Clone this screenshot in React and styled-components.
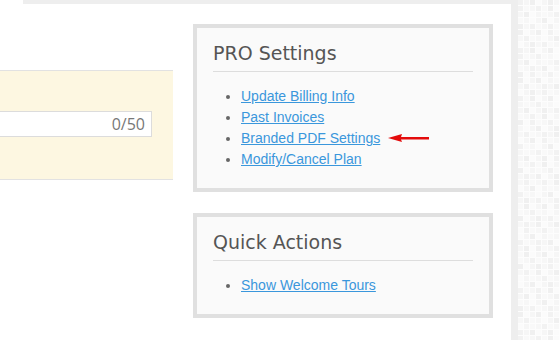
import React from "react";
import styled, { createGlobalStyle } from "styled-components";

const GlobalStyle = createGlobalStyle`
  html, body {
    margin: 0;
    padding: 0;
    background: #fff;
  }
  body {
    font-family: "Liberation Sans", Arial, sans-serif;
  }
`;

const Page = styled.div`
  display: flex;
  width: 560px;
  height: 340px;
  overflow: hidden;
  background: #fff;
`;

const Content = styled.div`
  width: 513px;
  display: flex;
  flex-direction: column;
`;

const TopBar = styled.div`
  height: 4px;
  margin-left: 23px;
  background: #eeeeee;
`;

const Columns = styled.div`
  display: flex;
  align-items: flex-start;
`;

const MainColumn = styled.div`
  width: 173px;
  padding-top: 66px;
`;

const NoteBox = styled.div`
  background: #fdf7e1;
  border-top: 1px solid #e2e2e2;
  border-bottom: 1px solid #e2e2e2;
  padding: 40px 21px 42px 0;
`;

const CountInput = styled.div`
  height: 24px;
  background: #fff;
  border: 1px solid #dcdcdc;
  border-left: none;
  display: flex;
  align-items: center;
  justify-content: flex-end;
  padding-right: 6px;
  font-family: "Open Sans", sans-serif;
  font-size: 16px;
  color: #777;
`;

const Sidebar = styled.div`
  width: 300px;
  margin-left: 20px;
  padding-top: 20px;
  display: flex;
  flex-direction: column;
  gap: 21px;
`;

const Card = styled.section`
  border: 4px solid #e0e0e0;
  background: #fafafa;
  padding: 12px 16px 18px;
`;

const CardTitle = styled.h2`
  margin: 0;
  font-family: "DejaVu Sans", sans-serif;
  font-weight: normal;
  font-size: 19px;
  line-height: 27px;
  color: #555;
  padding-bottom: 4px;
  border-bottom: 1px solid #dddddd;
`;

const LinkList = styled.ul`
  margin: 14px 0 0;
  padding: 0 0 0 28px;
  list-style: disc;
  color: #666;
`;

const Item = styled.li`
  font-size: 14px;
  line-height: 21px;
`;

const ItemLink = styled.a`
  color: #3a97dc;
  text-decoration: underline;
  cursor: pointer;
`;

const Arrow = styled.svg`
  margin-left: 8px;
  vertical-align: middle;
  position: relative;
  top: -1px;
`;

const Gutter = styled.div`
  width: 7px;
  background: #eeeeee;
`;

const Mosaic = styled.div`
  flex: 1;
  display: grid;
  grid-template-columns: repeat(7, 6px);
  grid-auto-rows: 6px;
  background: #fbfbfb;
  align-content: start;
`;

const Tile = styled.div`
  box-shadow: inset -1px -1px 0 #fdfdfd;
`;

const shades = ["#f2f2f2", "#f6f6f6", "#f9f9f9", "#f0f0f0", "#f7f7f7", "#fbfbfb"];

const tiles = Array.from({ length: 7 * 57 }, (_, i) => {
  const v = (i * 7919 + ((i * 31) % 17) * 13) % shades.length;
  return shades[v];
});

const ProLinks = [
  "Update Billing Info",
  "Past Invoices",
  "Branded PDF Settings",
  "Modify/Cancel Plan",
];

const App = () => {
  return (
    <>
      <GlobalStyle />
      <Page>
        <Content>
          <TopBar />
          <Columns>
            <MainColumn>
              <NoteBox>
                <CountInput>0/50</CountInput>
              </NoteBox>
            </MainColumn>
            <Sidebar>
              <Card>
                <CardTitle>PRO Settings</CardTitle>
                <LinkList>
                  {ProLinks.map((label) => (
                    <Item key={label}>
                      <ItemLink>{label}</ItemLink>
                      {label === "Branded PDF Settings" && (
                        <Arrow width="41" height="10" viewBox="0 0 41 10">
                          <path d="M0 5 L14 1 L13 4 L41 4 L41 6.5 L13 6.5 L14 9 Z" fill="#e30b0b" />
                        </Arrow>
                      )}
                    </Item>
                  ))}
                </LinkList>
              </Card>
              <Card>
                <CardTitle>Quick Actions</CardTitle>
                <LinkList>
                  <Item>
                    <ItemLink>Show Welcome Tours</ItemLink>
                  </Item>
                </LinkList>
              </Card>
            </Sidebar>
          </Columns>
        </Content>
        <Gutter />
        <Mosaic>
          {tiles.map((c, i) => (
            <Tile key={i} style={{ background: c }} />
          ))}
        </Mosaic>
      </Page>
    </>
  );
};

export default App;
